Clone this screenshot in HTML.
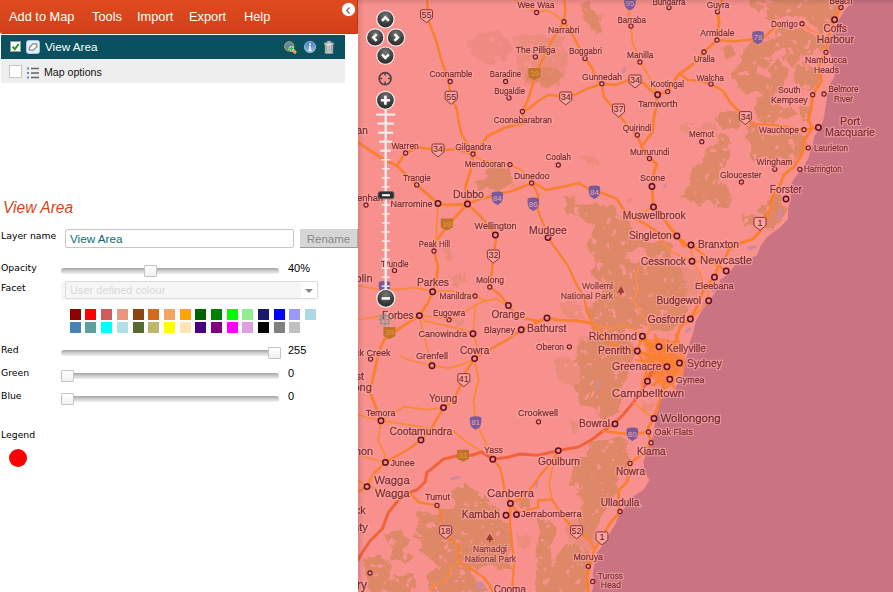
<!DOCTYPE html>
<html><head><meta charset="utf-8"><title>Spatial Portal</title>
<style>
html,body{margin:0;padding:0;width:893px;height:592px;overflow:hidden;background:#fff;font-family:"Liberation Sans",sans-serif}
#panel{position:absolute;left:0;top:0;width:358px;height:592px;background:#fff;overflow:hidden}
#hdr{position:absolute;left:0;top:0;width:358px;height:34px;background:linear-gradient(#e04b21,#d9461c 50%,#d03f1b);border-right:1px solid #c2350f;border-bottom:1px solid #c3370f;box-sizing:border-box;border-bottom-left-radius:3px}
#hdr span{position:absolute;top:9px;color:#fff;font-size:12.8px;line-height:15px;white-space:nowrap}
#collapse{position:absolute;left:342px;top:2.5px;width:13px;height:13px;border-radius:50%;background:#fff;box-shadow:0 0 1px #ccc}
#lyr{position:absolute;left:1px;top:35px;width:344px;height:24px;background:#09515e}
#lyr span{position:absolute;left:44px;top:5px;color:#fff;font-size:11.7px;line-height:14px}
#opt{position:absolute;left:1px;top:59px;width:344px;height:24px;background:#eeeeee}
#opt span{position:absolute;left:43px;top:6px;color:#111;font-size:10.6px;line-height:14px}
.cb{position:absolute;width:11px;height:11px;background:#fff;border:1px solid #c8c8c0}
.lbl{position:absolute;left:1px;margin-top:1px;font-family:"DejaVu Sans","Liberation Sans",sans-serif;font-size:9.3px;line-height:12px;color:#000;white-space:nowrap}
.val{position:absolute;left:288px;margin-top:-1px;font-size:11px;line-height:12px;color:#000}
.trk{position:absolute;left:61px;margin-top:1px;width:218px;height:6px;border-radius:3px;background:linear-gradient(#a2a2a2,#cbcbcb 45%,#f0f0f0)}
.knob{position:absolute;margin-top:0;width:11px;height:10px;border:1px solid #c4c4c4;background:linear-gradient(#fff,#f0f0f0);border-radius:1px}
.sw{position:absolute;width:11px;height:11px;display:block}
#ttl{position:absolute;left:3px;top:199px;font-size:15.6px;font-style:italic;color:#d9461c;line-height:18px}
#inp{position:absolute;left:65px;top:229px;width:229px;height:19px;box-sizing:border-box;border:1px solid #c6c6c6;border-radius:2px;background:#fff;color:#0b6e6e;font-size:11.7px;line-height:17px;padding-left:4px;padding-top:0}
#btn{position:absolute;left:300px;top:229px;width:58px;height:19px;box-sizing:border-box;background:#d6d6d6;border-bottom:1px solid #9a9a9a;border-right:1px solid #aaa;color:#8a8a8a;font-size:11.5px;line-height:20px;text-align:center}
#sel{position:absolute;left:61px;top:281px;width:258px;height:19px;background:#f6f6f6}
#sel div{position:absolute;left:4px;top:0;width:253px;height:18px;box-sizing:border-box;border:1px solid #dcdcdc;border-radius:2px;color:#d8d8d8;font-size:11px;line-height:17px;padding-left:4px}
#sel b{position:absolute;left:240px;top:1px;width:16px;height:16px;background:#fff}
#sel b:after{content:"";position:absolute;left:3.5px;top:6.5px;border:4.5px solid transparent;border-top:4.5px solid #888;border-bottom:0}
#map{position:absolute;left:358px;top:0;width:535px;height:592px;background:#f89090;overflow:hidden}
</style></head><body>
<div id="panel">
<div id="hdr"><span style="left:9px">Add to Map</span><span style="left:92px">Tools</span><span style="left:137px">Import</span><span style="left:189px">Export</span><span style="left:244px">Help</span>
<div id="collapse"><svg width="13" height="13" viewBox="0 0 13 13"><path d="M7.6 3.5 L4.8 6.6 L7.6 9.7" fill="none" stroke="#777" stroke-width="1.5"/></svg></div></div>
<div id="lyr"><i class="cb" style="left:9px;top:6px;width:9px;height:9px;border-color:#999"></i>
<svg style="position:absolute;left:8px;top:5px" width="13" height="13" viewBox="0 0 13 13"><path d="M3.6 6.6 L5.8 9.2 L9.8 4" fill="none" stroke="#1a9a1a" stroke-width="1.9"/></svg>
<svg style="position:absolute;left:25px;top:5px" width="14" height="14" viewBox="0 0 15 15"><rect x="0.5" y="0.5" width="14" height="14" rx="2.5" fill="#e4f1fa" stroke="#a9cbe4"/><path d="M3.600 10.800 V8 L7.200 4.200 H11.600 V7 L8 10.800Z" fill="#fff" stroke="#8a8a8a" stroke-width="1.4" stroke-linejoin="round"/></svg>
<span>View Area</span>
<svg style="position:absolute;left:282px;top:4px" width="56" height="17" viewBox="0 0 56 17">
<defs><linearGradient id="ig" x1="0" y1="0" x2="0" y2="1"><stop offset="0" stop-color="#3f76c4"/><stop offset="1" stop-color="#9dbfe8"/></linearGradient><linearGradient id="tg" x1="0" y1="0" x2="1" y2="0"><stop offset="0" stop-color="#b4b4b4"/><stop offset=".5" stop-color="#e6e6e6"/><stop offset="1" stop-color="#b0b0b0"/></linearGradient></defs>
<circle cx="6.3" cy="7.4" r="4.7" fill="#5b8ba2" stroke="#c9a64e" stroke-width="1"/><path d="M10.2 11.300 L12 13.2" stroke="#e0a468" stroke-width="3.2" stroke-linecap="round"/><path d="M5.6 9.7 h5.400 M8.3 7 v5.400" stroke="#d8f0d0" stroke-width="2.6"/><path d="M6 9.7 h4.600 M8.3 7.4 v4.600" stroke="#4cb84c" stroke-width="1.5"/>
<circle cx="27" cy="8" r="5.600" fill="url(#ig)" stroke="#8fb4e6" stroke-width="1"/><path d="M27 7.200 v4 M25.600 11.300 h3 M26 7.200 h1.200" stroke="#fff" stroke-width="1.500"/><circle cx="27" cy="5" r="1" fill="#fff"/>
<path d="M41.400 3.800 h9.200 v1.800 h-0.700 v8.800 h-7.800 v-8.800 h-0.700z M44.200 2.200 h3.600 v1.600 h-3.600z" fill="url(#tg)" stroke="#9a9a9a" stroke-width=".5"/><path d="M43.800 6.500 v7 M46 6.500 v7 M48.200 6.500 v7" stroke="#8f8f8f" stroke-width="0.9"/>
</svg></div>
<div id="opt"><i class="cb" style="left:8px;top:6px"></i>
<svg style="position:absolute;left:26px;top:8px" width="13" height="12" viewBox="0 0 13 12"><path d="M0 1.5h2M0 6h2M0 10.5h2" stroke="#5a8fd0" stroke-width="2"/><path d="M4 1.5h8M4 6h8M4 10.5h8" stroke="#666" stroke-width="1.3"/></svg>
<span>Map options</span></div>
<div id="ttl">View Area</div>
<div class="lbl" style="top:229px">Layer name</div>
<div id="inp">View Area</div><div id="btn">Rename</div>
<div class="lbl" style="top:261px">Opacity</div><div class="trk" style="top:267px"></div><i class="knob" style="left:144px;top:265px"></i><div class="val" style="top:263px">40%</div>
<div class="lbl" style="top:281px">Facet</div>
<div id="sel"><div>User defined colour</div><b></b></div>
<i class="sw" style="left:70px;top:309px;background:#8b0000"></i>
<i class="sw" style="left:85px;top:309px;background:#ff0000"></i>
<i class="sw" style="left:101px;top:309px;background:#cd5c5c"></i>
<i class="sw" style="left:117px;top:309px;background:#e9967a"></i>
<i class="sw" style="left:133px;top:309px;background:#8b4513"></i>
<i class="sw" style="left:148px;top:309px;background:#d2691e"></i>
<i class="sw" style="left:164px;top:309px;background:#f4a460"></i>
<i class="sw" style="left:180px;top:309px;background:#ffa500"></i>
<i class="sw" style="left:195px;top:309px;background:#006400"></i>
<i class="sw" style="left:211px;top:309px;background:#008000"></i>
<i class="sw" style="left:227px;top:309px;background:#00ff00"></i>
<i class="sw" style="left:242px;top:309px;background:#90ee90"></i>
<i class="sw" style="left:258px;top:309px;background:#191970"></i>
<i class="sw" style="left:274px;top:309px;background:#0000ff"></i>
<i class="sw" style="left:289px;top:309px;background:#9999ff"></i>
<i class="sw" style="left:305px;top:309px;background:#add8e6"></i>
<i class="sw" style="left:70px;top:322px;background:#4682b4"></i>
<i class="sw" style="left:85px;top:322px;background:#5f9ea0"></i>
<i class="sw" style="left:101px;top:322px;background:#00ffff"></i>
<i class="sw" style="left:117px;top:322px;background:#b0e0e6"></i>
<i class="sw" style="left:133px;top:322px;background:#556b2f"></i>
<i class="sw" style="left:148px;top:322px;background:#bdb76b"></i>
<i class="sw" style="left:164px;top:322px;background:#ffff00"></i>
<i class="sw" style="left:180px;top:322px;background:#ffe4b5"></i>
<i class="sw" style="left:195px;top:322px;background:#4b0082"></i>
<i class="sw" style="left:211px;top:322px;background:#800080"></i>
<i class="sw" style="left:227px;top:322px;background:#ff00ff"></i>
<i class="sw" style="left:242px;top:322px;background:#dda0dd"></i>
<i class="sw" style="left:258px;top:322px;background:#000000"></i>
<i class="sw" style="left:274px;top:322px;background:#808080"></i>
<i class="sw" style="left:289px;top:322px;background:#c0c0c0"></i>
<div class="lbl" style="top:343px">Red</div><div class="trk" style="top:349px"></div><i class="knob" style="left:268px;top:347px"></i><div class="val" style="top:345px">255</div>
<div class="lbl" style="top:366px">Green</div><div class="trk" style="top:372px"></div><i class="knob" style="left:61px;top:370px"></i><div class="val" style="top:368px">0</div>
<div class="lbl" style="top:389px">Blue</div><div class="trk" style="top:395px"></div><i class="knob" style="left:61px;top:393px"></i><div class="val" style="top:391px">0</div>
<div class="lbl" style="top:428px">Legend</div>
<div style="position:absolute;left:9px;top:449px;width:18px;height:18px;border-radius:50%;background:#ff0000"></div>
</div>
<div id="map"><svg width="535" height="592" viewBox="0 0 535 592" style="position:absolute;left:0;top:0;font-family:'Liberation Sans',sans-serif">
<defs><linearGradient id="sht" x1="0" y1="0" x2="0" y2="1"><stop offset="0" stop-color="#000" stop-opacity=".10"/><stop offset="1" stop-color="#000" stop-opacity="0"/></linearGradient><linearGradient id="shl" x1="0" y1="0" x2="1" y2="0"><stop offset="0" stop-color="#000" stop-opacity=".10"/><stop offset="1" stop-color="#000" stop-opacity="0"/></linearGradient><filter id="halo" x="0" y="0" width="535" height="592" filterUnits="userSpaceOnUse"><feMorphology in="SourceAlpha" operator="dilate" radius="1" result="d"/><feGaussianBlur in="d" stdDeviation=".5" result="b"/><feFlood flood-color="#ffb0ae" flood-opacity=".62"/><feComposite in2="b" operator="in" result="h"/><feMerge><feMergeNode in="h"/><feMergeNode in="SourceGraphic"/></feMerge></filter><filter id="rough" x="0" y="0" width="535" height="592" filterUnits="userSpaceOnUse"><feTurbulence type="fractalNoise" baseFrequency="0.07" numOctaves="4" seed="7" result="n"/><feDisplacementMap in="SourceGraphic" in2="n" scale="14" xChannelSelector="R" yChannelSelector="G" result="d"/><feTurbulence type="fractalNoise" baseFrequency="0.13" numOctaves="3" seed="23" result="m"/><feColorMatrix in="m" type="matrix" values="0 0 0 0 0  0 0 0 0 0  0 0 0 0 0  0 0 16 0 -4.6" result="mk"/><feComposite in="d" in2="mk" operator="in"/></filter><radialGradient id="gbtn" cx=".5" cy=".3" r=".8"><stop offset="0" stop-color="#777"/><stop offset=".6" stop-color="#3a3a3a"/><stop offset="1" stop-color="#222"/></radialGradient></defs>
<rect width="535" height="592" fill="#f8908d"/>
<g filter="url(#rough)"><g fill="#ee8a82">
<polygon points="156.0,34.0 182.0,36.0 206.0,34.0 208.0,60.0 204.0,85.0 182.0,88.0 164.0,84.0 158.0,66.0"/>
<polygon points="113.5,38.5 121.6,32.4 129.7,35.5 139.9,32.4 150.0,40.5 154.1,52.7 150.0,60.8 141.9,56.8 137.8,64.9 125.7,62.8 117.6,56.8 112.5,48.6"/>
</g><g fill="#ec8c7c">
<polygon points="222.6,153.4 228.6,154.5 240.8,163.6 238.8,167.6 230.7,163.6"/>
<polygon points="269.2,198.0 274.3,197.0 275.3,203.1 270.2,205.1"/>
<polygon points="321.9,124.1 332.0,122.0 340.1,128.1 350.3,124.1 360.0,126.1 360.0,134.2 350.3,132.2 338.1,134.2 325.9,132.2"/>
<polygon points="158.0,36.0 204.0,36.0 206.0,66.0 162.0,68.0"/>
<polygon points="168.0,68.0 202.0,67.0 203.0,84.0 182.0,87.0 169.0,84.0"/>
<polygon points="152.0,183.9 158.1,182.8 157.7,188.9 152.4,189.9"/>
<polygon points="85.1,246.1 92.2,247.1 93.2,260.3 88.2,260.3"/>
<polygon points="91.2,274.5 105.4,275.5 106.4,284.6 99.3,287.6 92.2,285.6"/>
<polygon points="97.3,318.0 107.4,317.0 107.4,325.1 98.3,325.1"/>
<polygon points="321.9,260.3 334.1,266.4 342.2,276.5 342.2,288.6 338.1,300.8 331.0,306.9 322.9,293.7 327.0,280.5 319.9,273.4"/>
<polygon points="202.3,302.8 212.4,300.8 226.6,306.9 225.6,318.0 214.5,319.1 204.3,315.0"/>
<polygon points="220.5,337.3 232.7,335.3 240.8,345.4 238.8,360.0 220.5,360.0 216.5,349.5"/>
<polygon points="198.2,360.0 224.6,360.0 224.6,386.4 216.5,386.4 202.3,382.3 197.2,374.2"/>
<polygon points="212.4,422.8 219.5,420.8 221.6,430.9 214.5,433.0"/>
<polygon points="285.4,400.5 296.6,401.6 295.5,412.7 287.4,412.7"/>
<polygon points="160.1,534.8 172.3,536.9 171.3,549.0 161.1,548.0"/>
<polygon points="209.1,520.2 218.4,515.5 230.8,528.0 235.5,538.9 230.8,554.4 223.0,548.2 215.3,546.6 210.6,534.2"/>
</g><g fill="#de8868" stroke="#de8868" stroke-width="3.5" stroke-linejoin="round">
<polygon points="395.8,0.0 395.0,5.9 400.2,10.3 406.1,5.9 410.5,10.3 409.0,17.6 414.9,20.6 420.7,14.7 426.6,17.6 432.5,14.7 438.4,17.6 444.2,14.7 450.1,19.1 457.4,25.0 464.8,29.4 470.7,26.4 475.1,17.6 478.0,8.8 480.9,0.0"/>
<polygon points="419.3,29.4 428.1,27.9 438.4,30.8 447.2,29.4 456.0,33.8 464.8,36.7 467.7,44.1 463.3,51.4 456.0,48.5 450.1,54.3 444.2,49.9 438.4,55.8 441.3,63.1 435.4,66.1 429.5,58.7 431.0,49.9 425.1,47.0 420.7,51.4 417.8,44.1 420.7,36.7"/>
<polygon points="388.4,48.5 394.3,42.6 401.6,44.1 406.1,39.6 413.4,41.1 417.8,44.1 416.3,51.4 410.5,55.8 411.9,61.7 406.1,66.1 400.2,63.1 395.8,67.5 398.7,76.4 406.1,82.2 409.0,86.9 381.1,86.9 379.6,79.3 375.2,73.4 378.2,66.1 384.0,64.6 382.6,57.3 388.4,54.3"/>
<polygon points="366.4,51.4 372.3,48.5 374.5,54.3 369.3,57.3"/>
<polygon points="438.4,70.5 447.2,66.1 456.0,69.0 458.9,76.4 456.0,86.9 444.2,86.9 441.3,79.3"/>
<polygon points="411.9,69.0 420.7,64.6 428.1,69.0 426.6,79.3 420.7,86.9 411.9,86.9 413.4,76.4"/>
<polygon points="380.2,80.0 386.1,84.4 390.5,81.5 403.7,80.0 412.5,84.4 418.4,80.0 424.2,82.9 421.3,88.8 415.4,91.7 412.5,99.1 415.4,106.4 424.2,109.4 433.0,107.9 437.4,113.8 430.1,118.2 421.3,116.7 415.4,122.6 406.6,119.6 400.7,115.2 396.3,109.4 399.3,102.0 403.7,94.7 397.8,90.3 390.5,93.2 383.1,88.8"/>
<polygon points="359.6,118.2 368.4,113.8 375.8,110.8 380.2,116.7 378.7,124.1 371.4,127.0 364.0,124.1"/>
<polygon points="391.9,125.5 400.7,128.5 403.7,135.8 409.5,138.7 406.6,146.1 403.7,153.4 397.8,159.3 393.4,153.4 394.9,144.6 390.5,138.7 393.4,132.9"/>
<polygon points="350.8,149.0 359.6,146.1 367.0,150.5 371.4,157.8 368.4,166.9 353.7,166.9 347.9,159.3"/>
<polygon points="424.2,141.7 433.0,138.7 441.9,141.7 444.8,149.0 438.9,156.4 430.1,159.3 424.2,153.4"/>
<polygon points="443.3,105.0 450.7,106.4 449.2,118.2 443.3,121.1"/>
<polygon points="358.2,138.7 365.5,135.8 371.4,141.7 364.0,146.1"/>
<polygon points="393.5,138.2 403.6,132.2 415.8,138.2 425.9,134.2 440.1,136.2 446.2,142.3 442.2,154.5 432.0,160.5 425.9,156.5 415.8,160.5 405.7,154.5 395.5,156.5"/>
<polygon points="355.0,184.9 365.1,186.9 371.2,195.0 367.2,205.1 359.1,207.2 355.0,205.1"/>
<polygon points="411.8,201.1 421.9,197.0 425.9,209.2 423.9,221.4 415.8,229.5 407.7,225.4 405.7,215.3 399.6,209.2 405.7,203.1"/>
<polygon points="385.4,215.3 397.6,217.3 395.5,225.4 387.4,225.4"/>
<polygon points="334.1,174.7 342.2,168.6 352.3,163.6 360.0,166.6 360.0,205.1 352.3,201.1 342.2,205.1 334.1,201.1 328.0,195.0 334.1,186.9 332.0,180.8"/>
<polygon points="208.4,201.1 216.5,199.1 220.5,205.1 230.7,207.2 238.8,203.1 246.9,209.2 257.0,207.2 261.1,215.3 269.2,221.4 273.2,229.5 269.2,240.0 232.7,240.0 236.8,229.5 228.6,221.4 220.5,215.3 212.4,211.2"/>
<polygon points="226.6,4.1 234.7,6.1 240.8,16.2 242.8,28.4 238.8,34.5 232.7,30.4 228.6,20.3 225.6,12.2"/>
<polygon points="172.0,70.0 200.0,69.0 201.0,82.0 182.0,85.0 173.0,82.0"/>
<polygon points="129.7,170.7 150.0,168.6 151.0,180.8 145.9,186.9 141.9,195.0 133.8,190.9 129.7,186.9 121.6,190.9 119.6,180.8 127.7,178.8"/>
<polygon points="230.7,240.0 273.2,240.0 275.3,242.4 305.7,241.6 312.8,246.1 309.7,254.2 311.8,264.3 319.9,273.4 327.0,280.5 322.9,293.7 330.0,306.9 321.9,321.1 313.8,329.2 305.7,328.2 293.5,329.2 287.4,325.5 277.3,329.2 267.2,326.1 257.0,331.2 246.9,329.2 235.1,325.1 231.1,317.0 233.1,308.9 239.8,300.8 245.9,291.7 246.9,280.5 235.7,275.5 238.8,266.4 240.8,258.2 234.7,252.2"/>
<polygon points="240.8,335.3 257.0,333.2 271.2,341.4 275.3,353.5 273.2,360.0 222.6,360.0 220.5,349.5 226.6,341.4"/>
<polygon points="220.5,360.0 261.1,360.0 269.2,372.2 265.1,384.3 257.0,390.4 261.1,400.5 257.0,412.7 246.9,416.8 238.8,408.6 228.6,404.6 220.5,396.5 218.5,386.4 223.6,372.2"/>
<polygon points="216.5,480.0 222.6,467.4 230.7,457.3 238.8,447.2 248.9,441.1 261.1,437.0 269.2,441.1 265.1,451.2 259.1,459.3 257.0,469.5 255.0,480.0"/>
<polygon points="58.8,516.6 68.9,512.5 77.0,518.6 81.1,510.5 89.2,512.5 97.3,502.4 95.3,492.3 105.4,486.2 113.5,492.3 121.6,496.3 129.7,502.4 141.9,518.6 150.0,524.7 152.0,538.9 145.9,557.1 154.1,565.2 141.9,567.3 129.7,561.2 121.6,567.3 109.5,565.2 113.5,577.4 125.7,585.5 129.7,592.0 73.0,592.0 70.9,577.4 81.1,569.3 77.0,559.2 66.9,553.1 68.9,540.9 58.8,536.9 60.8,526.7"/>
<polygon points="30.4,538.9 40.5,532.8 48.6,538.9 44.6,549.0 52.7,557.1 44.6,563.2 32.4,557.1 34.5,547.0"/>
<polygon points="8.1,561.2 20.3,557.1 32.4,563.2 30.4,573.4 40.5,577.4 52.7,573.4 56.8,585.5 48.6,592.0 12.2,592.0 10.1,577.4"/>
<polygon points="239.1,440.0 264.7,440.0 269.9,450.3 267.3,465.7 259.6,481.1 254.5,491.4 249.3,506.8 241.6,517.1 236.5,529.9 231.4,537.6 226.2,529.9 223.6,517.1 228.8,504.2 223.6,491.4 213.4,483.7 215.9,470.8 223.6,458.0 231.4,447.7"/>
<polygon points="184.2,520.2 192.0,518.7 195.8,528.0 191.2,538.9 189.6,551.3 192.0,562.2 195.1,570.0 195.1,592.0 180.3,592.0 181.8,570.0 179.5,551.3 182.6,538.9"/>
<polygon points="195.1,562.2 199.7,554.4 209.1,551.3 215.3,546.6 223.0,548.2 230.8,554.4 229.3,565.3 230.8,577.7 229.3,592.0 195.1,592.0"/>
<polygon points="162.0,499.1 169.7,498.6 170.2,508.8 162.0,509.4"/>
</g><g fill="#f8908d">
<polygon points="269.2,250.1 277.3,247.1 286.4,250.1 287.4,259.3 279.3,262.3 271.2,260.3"/>
</g></g>
<polygon points="495.0,0.0 487.0,10.0 480.7,20.0 474.6,34.5 470.5,48.6 474.6,60.8 476.6,77.0 470.5,87.0 468.5,101.0 465.5,120.0 462.4,128.0 456.4,136.0 454.3,146.4 450.3,158.5 444.2,168.7 436.0,178.8 432.0,187.0 433.0,199.0 430.0,209.0 430.0,219.3 422.0,227.4 413.8,233.5 409.0,237.0 403.0,245.3 399.0,255.4 389.0,259.5 376.7,265.5 370.6,273.7 362.5,279.7 358.5,290.0 352.4,300.0 344.3,310.0 338.2,320.3 335.0,333.5 332.0,341.6 329.6,353.8 326.9,364.6 325.5,374.0 320.0,383.5 316.0,390.0 306.6,395.7 302.5,400.0 299.6,410.7 297.6,420.8 295.5,433.0 293.5,441.0 289.5,451.0 285.4,461.4 286.4,471.5 291.5,480.0 285.4,490.0 275.3,496.3 269.2,504.4 261.0,514.6 257.0,524.7 251.0,534.8 245.0,545.0 238.8,553.0 236.8,563.2 234.7,573.4 236.8,581.5 233.7,592.0 535.0,592.0 535.0,0.0" fill="#c97383"/>
<ellipse cx="394.0" cy="247.5" rx="5.2" ry="1.7" transform="rotate(-10 394.0 247.5)" fill="#cd8a9e"/>
<ellipse cx="356.0" cy="288.0" rx="2.2" ry="4.5" transform="rotate(15 356.0 288.0)" fill="#cd8a9e"/>
<ellipse cx="346.0" cy="305.0" rx="1.9" ry="3.0" transform="rotate(10 346.0 305.0)" fill="#cd8a9e"/>
<ellipse cx="179.0" cy="484.0" rx="1.7" ry="3.8" transform="rotate(10 179.0 484.0)" fill="#cd8a9e"/>
<ellipse cx="122.0" cy="586.0" rx="3.8" ry="4.5" transform="rotate(-30 122.0 586.0)" fill="#cd8a9e"/>
<ellipse cx="97.0" cy="478.0" rx="6.0" ry="1.5" transform="rotate(-15 97.0 478.0)" fill="#cd8a9e"/>
<ellipse cx="86.0" cy="525.0" rx="1.2" ry="6.0" transform="rotate(5 86.0 525.0)" fill="#cd8a9e"/>
<ellipse cx="150.0" cy="227.0" rx="1.9" ry="3.8" transform="rotate(30 150.0 227.0)" fill="#cd8a9e"/>
<ellipse cx="266.0" cy="70.0" rx="1.9" ry="3.4" transform="rotate(30 266.0 70.0)" fill="#cd8a9e"/>
<ellipse cx="307.0" cy="186.0" rx="2.2" ry="1.5" transform="rotate(-30 307.0 186.0)" fill="#cd8a9e"/>
<ellipse cx="422.0" cy="214.0" rx="2.2" ry="6.0" transform="rotate(20 422.0 214.0)" fill="#cd8a9e"/>
<ellipse cx="240.0" cy="385.0" rx="1.4" ry="6.0" transform="rotate(10 240.0 385.0)" fill="#cd8a9e"/>
<ellipse cx="282.0" cy="506.0" rx="3.0" ry="1.9" transform="rotate(0 282.0 506.0)" fill="#cd8a9e"/>
<ellipse cx="330.0" cy="330.0" rx="3.8" ry="1.4" transform="rotate(-35 330.0 330.0)" fill="#cd8a9e"/>
<ellipse cx="217.0" cy="462.0" rx="1.5" ry="2.2" transform="rotate(0 217.0 462.0)" fill="#cd8a9e"/>
<path d="M288.0,340.0 306.0,338.0 322.0,346.0 328.0,360.0 326.0,374.0 316.0,384.0 302.0,386.0 292.0,376.0 286.0,360.0 Z" fill="#fb7a2c" opacity=".55"/>
<g fill="none" stroke-linecap="round" stroke-linejoin="round">
<polyline points="69.0,0.0 71.0,22.0 78.0,40.5 83.0,59.0 91.0,81.0 92.0,95.0 99.0,109.5 100.3,120.0 103.4,134.0 115.0,154.0" stroke="#f9802f" stroke-width="2.5"/>
<polyline points="206.0,21.7 195.0,38.5 186.0,56.8 180.0,69.0 176.0,80.0 170.0,100.0 164.4,111.5" stroke="#f9802f" stroke-width="2.5"/>
<polyline points="206.0,21.7 207.4,10.0 206.4,0.0" stroke="#f9802f" stroke-width="2.5"/>
<polyline points="206.0,21.7 196.0,14.0 188.0,10.0 178.6,12.5 167.0,6.0 157.0,0.0" stroke="#f98a3c" stroke-width="1.9"/>
<polyline points="206.0,21.7 215.5,36.5 227.0,58.4 234.7,69.0 236.8,79.0 243.9,83.7" stroke="#f9802f" stroke-width="2.5"/>
<polyline points="164.4,111.5 172.0,108.0 180.0,101.0 190.0,95.0 201.0,96.0 216.5,95.0 228.7,89.0 243.9,83.7 257.0,85.0 271.0,80.0 285.4,83.0 293.5,91.0 299.6,94.7" stroke="#f9802f" stroke-width="2.5"/>
<polyline points="243.9,83.7 245.9,97.3 255.0,107.4 265.0,120.0 273.0,130.0 279.3,135.0 283.4,146.4" stroke="#f9802f" stroke-width="2.5"/>
<polyline points="270.0,0.0 270.0,10.0 273.0,26.0 274.0,40.5 282.0,62.0 291.5,77.0 299.6,94.7" stroke="#f98a3c" stroke-width="1.9"/>
<polyline points="299.6,94.7 309.7,91.6 320.0,75.0 334.0,65.0 346.0,52.0 358.4,40.5 361.0,22.0 359.5,11.8 364.0,0.0" stroke="#f9802f" stroke-width="3.0"/>
<polyline points="299.6,94.7 297.6,109.5 295.5,120.0 294.5,132.0 283.4,146.4 291.5,158.5 298.6,163.6 295.5,174.7 294.0,186.5 295.5,207.0 305.7,219.3 318.9,236.0 326.0,246.0 333.0,245.0" stroke="#f9802f" stroke-width="3.0"/>
<polyline points="322.0,74.0 330.0,80.0 342.0,81.0 353.0,84.0 355.0,85.0 365.0,91.0 373.0,103.4 383.4,113.5 389.5,120.0 395.5,124.0 415.8,125.0 436.0,128.0 446.0,129.7 460.4,127.5" stroke="#f9802f" stroke-width="2.5"/>
<polyline points="487.0,0.0 482.7,7.0 476.6,19.7 470.5,36.5 468.0,52.3 460.4,67.0 463.5,81.0 454.7,94.7 453.3,107.4 450.3,120.0 454.3,128.0 446.0,140.0 444.0,154.5 436.0,166.6 426.0,174.7 422.0,185.0 413.8,197.0 412.8,209.0 407.7,217.3 402.6,230.5 395.0,239.0 382.8,243.0 370.6,249.3 368.6,255.4 360.5,265.5 356.4,277.5 346.0,288.6 340.0,304.9 332.0,319.0 322.0,327.0 317.8,341.4 309.7,353.5 306.0,362.0" stroke="#f9802f" stroke-width="3.0"/>
<polyline points="359.0,40.0 375.0,41.5 393.5,39.5 403.6,39.5 415.8,28.4 422.0,23.0" stroke="#f9802f" stroke-width="2.5"/>
<polyline points="444.0,23.7 452.0,30.0 462.4,34.5 468.5,40.5" stroke="#f98a3c" stroke-width="1.9"/>
<polyline points="0.0,142.3 24.3,158.5 38.5,165.6 58.8,184.9 80.0,203.5 89.0,205.0 109.5,204.0" stroke="#f9802f" stroke-width="2.8"/>
<polyline points="38.5,165.6 47.6,153.0 60.8,147.4 80.0,150.0 97.3,149.4 115.0,154.0" stroke="#f9802f" stroke-width="2.5"/>
<polyline points="164.4,111.5 166.0,123.0 146.0,128.0 129.7,136.0 121.6,146.4 115.0,154.0 112.5,170.7 107.4,187.0 109.5,204.0" stroke="#f9802f" stroke-width="2.8"/>
<polyline points="115.0,154.0 123.7,160.5 152.0,164.6 164.0,170.7 174.0,182.8" stroke="#f98a3c" stroke-width="1.9"/>
<polyline points="109.5,204.0 121.6,199.0 137.8,195.0 154.0,191.0 174.0,182.8 180.0,185.0 188.0,190.0 208.4,186.0 220.5,183.0 230.7,189.0 247.0,194.0 259.0,199.0 265.0,209.0 275.3,217.3 289.5,225.4 301.6,233.5 318.9,236.0" stroke="#f9802f" stroke-width="2.5"/>
<polyline points="109.5,204.0 95.3,219.3 87.0,229.5 79.0,240.0 78.0,240.0 76.0,251.0 80.0,266.4 78.0,280.5 74.6,291.7 70.0,302.8 61.4,315.6 40.5,329.0 26.4,339.3 20.3,353.5 18.0,365.0 12.0,392.0 23.0,420.8" stroke="#f9802f" stroke-width="2.8"/>
<polyline points="80.0,203.5 79.0,221.4 78.0,240.0" stroke="#f98a3c" stroke-width="1.9"/>
<polyline points="109.5,204.0 121.6,215.3 131.8,227.4 137.4,235.0 137.8,240.0 134.8,262.3 131.8,287.0 142.0,294.7 150.4,305.5 160.0,317.0 180.0,321.0 189.0,318.0" stroke="#f9802f" stroke-width="2.5"/>
<polyline points="174.0,182.8 180.0,195.0 180.0,211.0 186.0,225.4 190.0,237.6 200.0,252.0 210.4,266.4 216.5,280.5 226.6,298.8 228.6,311.0 234.7,325.0" stroke="#f9802f" stroke-width="2.3"/>
<polyline points="295.5,207.0 285.4,212.0 275.3,217.3" stroke="#f98a3c" stroke-width="1.9"/>
<polyline points="74.6,291.7 56.8,287.6 36.5,289.7 16.0,288.6 0.0,285.6" stroke="#f98a3c" stroke-width="1.9"/>
<polyline points="74.6,291.7 91.0,290.7 117.0,296.0 127.7,300.8 137.8,298.8 150.4,305.5" stroke="#f98a3c" stroke-width="1.9"/>
<polyline points="61.4,315.6 77.0,317.0 91.0,319.7 105.4,313.0 117.6,304.9 127.7,300.8" stroke="#f98a3c" stroke-width="1.7"/>
<polyline points="61.4,315.6 67.0,321.0 85.0,325.0 101.4,329.0 115.0,333.7 119.6,347.4 116.6,358.6" stroke="#f98a3c" stroke-width="1.9"/>
<polyline points="115.0,333.7 116.6,317.0 117.6,304.9" stroke="#f98a3c" stroke-width="1.6"/>
<polyline points="61.4,315.6 65.0,331.0 69.0,347.4 74.0,365.7" stroke="#f98a3c" stroke-width="1.7"/>
<polyline points="116.6,358.6 131.8,349.5 150.0,339.3 163.2,329.8 180.0,322.0 189.0,318.0" stroke="#f9802f" stroke-width="2.5"/>
<polyline points="61.4,315.6 42.0,318.0 22.0,316.0 0.0,320.0" stroke="#f98a3c" stroke-width="1.5"/>
<polyline points="189.0,318.0 200.3,320.0 220.5,321.0 232.7,323.0 240.8,331.0 247.0,341.0 261.0,347.4 279.3,351.0 292.0,356.0 306.0,362.0 321.5,363.0" stroke="#f9802f" stroke-width="3.0"/>
<polyline points="234.7,325.0 252.0,328.0 267.0,326.0 277.3,330.0 284.4,336.3 294.0,342.0 301.0,346.8" stroke="#f98a3c" stroke-width="1.9"/>
<polyline points="281.4,266.4 277.3,276.5 280.3,288.6 275.3,300.8 281.4,311.0 289.5,321.0 291.5,333.0 284.4,336.3" stroke="#fb8a45" stroke-width="1.6"/>
<polyline points="302.0,240.0 313.8,252.0 334.0,261.3 347.0,262.0 360.5,265.5 368.2,271.0" stroke="#f98a3c" stroke-width="1.9"/>
<polyline points="318.9,236.0 328.0,244.0 333.5,244.5 342.0,252.0 354.0,262.0 368.2,271.0" stroke="#f9802f" stroke-width="2.5"/>
<polyline points="334.0,261.3 333.5,244.5" stroke="#f98a3c" stroke-width="1.6"/>
<polyline points="334.0,261.3 342.0,272.0 346.0,288.6" stroke="#f98a3c" stroke-width="1.6"/>
<polyline points="356.5,277.3 350.0,290.0 350.7,300.8 342.0,310.0 332.4,319.0" stroke="#f98a3c" stroke-width="1.7"/>
<polyline points="279.3,351.0 284.4,336.3" stroke="#f9802f" stroke-width="2.6"/>
<polyline points="301.0,346.8 306.0,362.0 309.0,366.7 321.5,363.0" stroke="#f9802f" stroke-width="2.6"/>
<polyline points="284.4,336.3 294.0,350.0 309.0,366.7" stroke="#f9802f" stroke-width="2.6"/>
<polyline points="279.3,351.0 287.0,365.0 289.5,381.3" stroke="#f9802f" stroke-width="2.6"/>
<polyline points="289.5,381.3 297.0,372.0 309.0,366.7" stroke="#f9802f" stroke-width="2.6"/>
<polyline points="309.0,366.7 311.8,379.3 305.7,384.0" stroke="#f9802f" stroke-width="2.6"/>
<polyline points="301.0,346.8 314.0,352.0 321.5,363.0" stroke="#f9802f" stroke-width="2.6"/>
<polyline points="292.0,356.0 297.0,366.0 309.0,366.7" stroke="#f9802f" stroke-width="2.6"/>
<polyline points="297.0,335.0 302.0,347.0 317.8,341.4" stroke="#f9802f" stroke-width="2.6"/>
<polyline points="309.7,353.5 314.0,360.0 321.5,363.0 318.0,372.0 311.8,379.3" stroke="#f9802f" stroke-width="2.6"/>
<polyline points="287.0,345.0 301.0,346.8 309.7,353.5" stroke="#f9802f" stroke-width="2.6"/>
<polyline points="293.5,372.0 302.0,374.0 311.8,379.3" stroke="#f9802f" stroke-width="2.6"/>
<polyline points="282.0,340.0 297.0,345.0 313.0,354.0 327.0,362.0" stroke="#f9802f" stroke-width="2.2"/>
<polyline points="282.0,352.0 297.0,356.0 313.0,362.0 325.0,366.0" stroke="#f9802f" stroke-width="2.2"/>
<polyline points="287.0,335.0 292.0,350.0 290.0,368.0 284.0,385.0" stroke="#f9802f" stroke-width="2.2"/>
<polyline points="297.0,338.0 302.0,355.0 304.0,372.0 297.0,385.0" stroke="#f9802f" stroke-width="2.2"/>
<polyline points="310.0,340.0 312.0,355.0 317.0,370.0 312.0,385.0" stroke="#f9802f" stroke-width="2.2"/>
<polyline points="290.0,374.0 302.0,370.0 317.0,372.0" stroke="#f9802f" stroke-width="2.2"/>
<polyline points="294.0,385.0 304.0,380.0 314.0,384.0 318.0,390.0" stroke="#f9802f" stroke-width="2.2"/>
<polyline points="318.0,335.0 322.0,345.0 326.0,355.0" stroke="#f9802f" stroke-width="2.2"/>
<polyline points="302.0,392.0 310.0,386.0" stroke="#f9802f" stroke-width="2.2"/>
<polyline points="278.0,360.0 292.0,362.0 306.0,366.0" stroke="#f9802f" stroke-width="2.2"/>
<polyline points="116.6,358.6 107.4,372.0 101.4,388.4 95.3,400.5 85.5,407.6 79.0,418.8 73.0,429.0 63.0,440.0 50.7,449.0 27.4,462.4 16.0,473.5 9.0,486.6 0.0,492.0" stroke="#f9802f" stroke-width="2.5"/>
<polyline points="116.6,358.6 120.6,380.0 115.5,400.5 117.6,420.8 125.7,439.0 134.8,459.3" stroke="#f98a3c" stroke-width="1.9"/>
<polyline points="74.0,365.7 91.0,368.0 105.4,364.0 116.6,358.6" stroke="#f98a3c" stroke-width="1.9"/>
<polyline points="74.0,365.7 50.7,360.0 42.0,356.0" stroke="#f98a3c" stroke-width="1.6"/>
<polyline points="23.0,420.8 46.6,406.6 69.0,409.7 85.5,407.6" stroke="#f98a3c" stroke-width="1.9"/>
<polyline points="23.0,420.8 44.6,423.9 63.0,427.0 73.0,429.0 95.3,431.0 109.5,443.0 121.6,450.0 134.8,459.3" stroke="#f98a3c" stroke-width="1.9"/>
<polyline points="23.0,420.8 20.0,441.0 26.4,453.0 27.4,462.4" stroke="#f98a3c" stroke-width="1.9"/>
<polyline points="23.0,420.8 0.0,414.7" stroke="#f98a3c" stroke-width="1.6"/>
<polyline points="27.4,462.4 0.0,455.0" stroke="#f98a3c" stroke-width="1.6"/>
<polyline points="16.0,472.0 9.0,486.6" stroke="#f98a3c" stroke-width="1.9"/>
<polyline points="0.0,560.0 4.0,553.0 12.0,541.0 24.3,528.8 30.4,512.5 40.5,500.0 52.7,492.0 58.8,490.0 67.0,482.0 69.0,472.0 73.0,469.5 85.0,459.3 101.4,455.3 113.5,455.3 123.7,452.0 134.8,459.3 150.0,457.3 162.0,454.0 180.0,455.3 200.3,450.6 220.5,447.0 234.7,439.0 245.0,431.0 257.0,423.0 265.0,414.7 275.3,402.6 285.4,388.4 289.5,381.3 293.5,372.0 302.0,366.0 309.0,366.7" stroke="#f0623a" stroke-width="3.0"/>
<polyline points="134.8,459.3 142.0,467.4 145.0,480.0 146.0,488.2 152.4,503.4" stroke="#f9802f" stroke-width="2.3"/>
<polyline points="245.0,431.0 261.0,433.0 274.0,434.0 290.5,432.0" stroke="#f9802f" stroke-width="2.3"/>
<polyline points="311.8,379.3 305.7,384.0 301.6,400.5 296.0,418.4 290.5,427.0 290.5,432.0 293.0,442.7 285.4,453.0 272.0,463.4 271.0,472.0 269.2,482.0 261.0,490.0 260.0,502.4 262.0,511.5 251.0,524.7 243.9,537.9 236.8,549.0 233.0,559.0 230.3,566.3 228.7,581.5 230.7,592.0" stroke="#f9802f" stroke-width="2.8"/>
<polyline points="275.3,402.6 285.4,410.7 296.0,418.4" stroke="#f98a3c" stroke-width="1.7"/>
<polyline points="200.3,450.6 194.0,470.0 191.0,485.0 194.0,499.4" stroke="#f98a3c" stroke-width="1.7"/>
<polyline points="52.7,494.0 60.8,502.4 79.0,505.4 83.0,512.5 84.0,524.7 87.6,531.8 93.2,540.0 101.4,547.0 100.3,561.2 113.5,569.3 125.7,577.4 131.8,585.5 135.0,592.0" stroke="#f9802f" stroke-width="2.3"/>
<polyline points="100.3,561.2 93.2,567.3 89.2,579.4 75.0,585.5 73.0,592.0" stroke="#f98a3c" stroke-width="1.9"/>
<polyline points="152.4,503.4 152.0,522.7 154.0,543.0 156.0,563.2 154.0,592.0" stroke="#f9802f" stroke-width="2.3"/>
<polyline points="152.4,503.4 166.2,496.3 176.4,484.0 182.0,475.0 194.0,462.0 200.3,450.6" stroke="#f9802f" stroke-width="2.3"/>
<polyline points="152.4,503.4 160.2,512.5 180.0,507.5 180.0,500.4 194.0,499.4 206.4,518.6 218.5,531.8 230.7,539.0 236.8,549.0" stroke="#f9802f" stroke-width="2.3"/>
<polyline points="9.0,486.6 22.0,490.0 40.5,500.0" stroke="#f98a3c" stroke-width="1.7"/>
<polyline points="9.0,486.6 0.0,480.0" stroke="#f98a3c" stroke-width="1.9"/>
</g>
<path d="M62.5 11.3 q0 -1.500 1.5 -1.5 h9 q1.5 0 1.5 1.5 v6.5 l-6 5 l-6 -5z" fill="#f9a39f" stroke="#7c2a2c" stroke-width=".9"/>
<text x="68.5" y="18.2" font-size="9" text-anchor="middle" fill="#6a1a1a">55</text>
<path d="M87.2 92.8 q0 -1.500 1.5 -1.5 h9 q1.5 0 1.5 1.5 v6.5 l-6 5 l-6 -5z" fill="#f9a39f" stroke="#7c2a2c" stroke-width=".9"/>
<text x="93.2" y="99.7" font-size="9" text-anchor="middle" fill="#6a1a1a">55</text>
<path d="M170.4 68.0 h12 v9 l-6 3 l-6 -3z" fill="#bd7428"/>
<text x="176.4" y="76.2" font-size="8" text-anchor="middle" fill="#f7943a">39</text>
<path d="M201.7 93.5 q0 -1.500 1.5 -1.5 h9 q1.5 0 1.5 1.5 v6.5 l-6 5 l-6 -5z" fill="#f9a39f" stroke="#7c2a2c" stroke-width=".9"/>
<text x="207.7" y="100.4" font-size="9" text-anchor="middle" fill="#6a1a1a">34</text>
<path d="M271.0 76.5 q0 -1.500 1.5 -1.5 h9 q1.5 0 1.5 1.5 v6.5 l-6 5 l-6 -5z" fill="#f9a39f" stroke="#7c2a2c" stroke-width=".9"/>
<text x="277.0" y="83.4" font-size="9" text-anchor="middle" fill="#6a1a1a">34</text>
<path d="M254.5 105.5 q0 -1.500 1.5 -1.5 h9 q1.5 0 1.5 1.5 v6.5 l-6 5 l-6 -5z" fill="#f9a39f" stroke="#7c2a2c" stroke-width=".9"/>
<text x="260.5" y="112.4" font-size="9" text-anchor="middle" fill="#6a1a1a">37</text>
<path d="M266.5 -1.9 q5.5 -2 11 0 q1 6 -1.5 10 q-4 2.5 -4 2.5 q0 0 -4 -2.5 q-2.500 -4 -1.5 -10z" fill="#7c5a98"/>
<text x="272.0" y="6.2" font-size="8" text-anchor="middle" fill="#e2a4b8">95</text>
<path d="M394.5 32.0 q5.5 -2 11 0 q1 6 -1.5 10 q-4 2.5 -4 2.5 q0 0 -4 -2.5 q-2.500 -4 -1.5 -10z" fill="#7c5a98"/>
<text x="400.0" y="40.1" font-size="8" text-anchor="middle" fill="#e2a4b8">78</text>
<path d="M381.4 113.1 q0 -1.500 1.5 -1.5 h9 q1.5 0 1.5 1.5 v6.5 l-6 5 l-6 -5z" fill="#f9a39f" stroke="#7c2a2c" stroke-width=".9"/>
<text x="387.4" y="120.0" font-size="9" text-anchor="middle" fill="#6a1a1a">34</text>
<path d="M74.0 145.5 q0 -1.500 1.5 -1.5 h9 q1.5 0 1.5 1.5 v6.5 l-6 5 l-6 -5z" fill="#f9a39f" stroke="#7c2a2c" stroke-width=".9"/>
<text x="80.0" y="152.4" font-size="9" text-anchor="middle" fill="#6a1a1a">34</text>
<path d="M133.8 192.5 q5.5 -2 11 0 q1 6 -1.5 10 q-4 2.5 -4 2.5 q0 0 -4 -2.5 q-2.500 -4 -1.5 -10z" fill="#7c5a98"/>
<text x="139.3" y="200.6" font-size="8" text-anchor="middle" fill="#e2a4b8">84</text>
<path d="M82.8 218.4 h12 v9 l-6 3 l-6 -3z" fill="#bd7428"/>
<text x="88.8" y="226.6" font-size="8" text-anchor="middle" fill="#f7943a">39</text>
<path d="M169.8 198.5 q5.5 -2 11 0 q1 6 -1.5 10 q-4 2.5 -4 2.5 q0 0 -4 -2.5 q-2.500 -4 -1.5 -10z" fill="#7c5a98"/>
<text x="175.3" y="206.6" font-size="8" text-anchor="middle" fill="#e2a4b8">86</text>
<path d="M230.9 186.5 q5.5 -2 11 0 q1 6 -1.5 10 q-4 2.5 -4 2.5 q0 0 -4 -2.5 q-2.500 -4 -1.5 -10z" fill="#7c5a98"/>
<text x="236.4" y="194.6" font-size="8" text-anchor="middle" fill="#e2a4b8">84</text>
<path d="M396.0 218.9 q0 -1.500 1.5 -1.5 h9 q1.5 0 1.5 1.5 v6.5 l-6 5 l-6 -5z" fill="#f9a39f" stroke="#7c2a2c" stroke-width=".9"/>
<text x="402.0" y="225.8" font-size="9" text-anchor="middle" fill="#6a1a1a">1</text>
<path d="M129.4 251.5 q0 -1.500 1.5 -1.5 h9 q1.5 0 1.5 1.5 v6.5 l-6 5 l-6 -5z" fill="#f9a39f" stroke="#7c2a2c" stroke-width=".9"/>
<text x="135.4" y="258.4" font-size="9" text-anchor="middle" fill="#6a1a1a">32</text>
<path d="M25.4 327.0 h12 v9 l-6 3 l-6 -3z" fill="#bd7428"/>
<text x="31.4" y="335.2" font-size="8" text-anchor="middle" fill="#f7943a">39</text>
<path d="M20.9 282.1 q5.5 -2 11 0 q1 6 -1.5 10 q-4 2.5 -4 2.5 q0 0 -4 -2.5 q-2.500 -4 -1.5 -10z" fill="#7c5a98"/>
<text x="26.4" y="290.2" font-size="8" text-anchor="middle" fill="#e2a4b8"></text>
<path d="M99.8 375.2 q0 -1.500 1.5 -1.5 h9 q1.5 0 1.5 1.5 v6.5 l-6 5 l-6 -5z" fill="#f9a39f" stroke="#7c2a2c" stroke-width=".9"/>
<text x="105.8" y="382.1" font-size="9" text-anchor="middle" fill="#6a1a1a">41</text>
<path d="M112.1 417.3 q5.5 -2 11 0 q1 6 -1.5 10 q-4 2.5 -4 2.5 q0 0 -4 -2.5 q-2.500 -4 -1.5 -10z" fill="#7c5a98"/>
<text x="117.6" y="425.4" font-size="8" text-anchor="middle" fill="#e2a4b8">81</text>
<path d="M99.0 449.7 h12 v9 l-6 3 l-6 -3z" fill="#bd7428"/>
<text x="105.0" y="457.9" font-size="8" text-anchor="middle" fill="#f7943a">31</text>
<path d="M268.8 428.5 q5.5 -2 11 0 q1 6 -1.5 10 q-4 2.5 -4 2.5 q0 0 -4 -2.5 q-2.500 -4 -1.5 -10z" fill="#7c5a98"/>
<text x="274.3" y="436.6" font-size="8" text-anchor="middle" fill="#e2a4b8">80</text>
<path d="M81.6 527.3 q0 -1.500 1.5 -1.5 h9 q1.5 0 1.5 1.5 v6.5 l-6 5 l-6 -5z" fill="#f9a39f" stroke="#7c2a2c" stroke-width=".9"/>
<text x="87.6" y="534.2" font-size="9" text-anchor="middle" fill="#6a1a1a">18</text>
<path d="M212.5 527.3 q0 -1.500 1.5 -1.5 h9 q1.5 0 1.5 1.5 v6.5 l-6 5 l-6 -5z" fill="#f9a39f" stroke="#7c2a2c" stroke-width=".9"/>
<text x="218.5" y="534.2" font-size="9" text-anchor="middle" fill="#6a1a1a">52</text>
<path d="M237.9 533.4 q0 -1.500 1.5 -1.5 h9 q1.5 0 1.5 1.5 v6.5 l-6 5 l-6 -5z" fill="#f9a39f" stroke="#7c2a2c" stroke-width=".9"/>
<text x="243.9" y="540.3" font-size="9" text-anchor="middle" fill="#6a1a1a">1</text>
<circle cx="92.2" cy="81.5" r="2.1" fill="#ee9092" stroke="#6c1c24" stroke-width="1.1"/>
<circle cx="147.6" cy="81.5" r="2.1" fill="#ee9092" stroke="#6c1c24" stroke-width="1.1"/>
<circle cx="151.0" cy="97.9" r="2.1" fill="#ee9092" stroke="#6c1c24" stroke-width="1.1"/>
<circle cx="177.3" cy="56.8" r="2.1" fill="#ee9092" stroke="#6c1c24" stroke-width="1.1"/>
<circle cx="178.6" cy="12.5" r="2.1" fill="#ee9092" stroke="#6c1c24" stroke-width="1.1"/>
<circle cx="164.4" cy="111.5" r="2.1" fill="#ee9092" stroke="#6c1c24" stroke-width="1.1"/>
<circle cx="206.0" cy="21.7" r="2.1" fill="#ee9092" stroke="#6c1c24" stroke-width="1.1"/>
<circle cx="227.0" cy="58.4" r="2.1" fill="#ee9092" stroke="#6c1c24" stroke-width="1.1"/>
<circle cx="243.9" cy="83.7" r="2.1" fill="#ee9092" stroke="#6c1c24" stroke-width="1.1"/>
<circle cx="273.0" cy="26.0" r="2.1" fill="#ee9092" stroke="#6c1c24" stroke-width="1.1"/>
<circle cx="282.0" cy="62.0" r="2.1" fill="#ee9092" stroke="#6c1c24" stroke-width="1.1"/>
<circle cx="309.7" cy="91.6" r="2.1" fill="#ee9092" stroke="#6c1c24" stroke-width="1.1"/>
<circle cx="299.6" cy="94.7" r="2.7" fill="#e98a90" stroke="#5e0f1c" stroke-width="1.5"/>
<circle cx="346.0" cy="52.0" r="2.1" fill="#ee9092" stroke="#6c1c24" stroke-width="1.1"/>
<circle cx="311.0" cy="7.5" r="2.1" fill="#ee9092" stroke="#6c1c24" stroke-width="1.1"/>
<circle cx="353.0" cy="84.0" r="2.1" fill="#ee9092" stroke="#6c1c24" stroke-width="1.1"/>
<circle cx="359.5" cy="11.8" r="2.1" fill="#ee9092" stroke="#6c1c24" stroke-width="1.1"/>
<circle cx="359.0" cy="40.0" r="2.1" fill="#ee9092" stroke="#6c1c24" stroke-width="1.1"/>
<circle cx="444.0" cy="23.7" r="2.1" fill="#ee9092" stroke="#6c1c24" stroke-width="1.1"/>
<circle cx="476.6" cy="19.7" r="2.7" fill="#e98a90" stroke="#5e0f1c" stroke-width="1.5"/>
<circle cx="468.0" cy="52.3" r="2.1" fill="#ee9092" stroke="#6c1c24" stroke-width="1.1"/>
<circle cx="454.7" cy="94.7" r="2.1" fill="#ee9092" stroke="#6c1c24" stroke-width="1.1"/>
<circle cx="466.0" cy="94.0" r="2.1" fill="#ee9092" stroke="#6c1c24" stroke-width="1.1"/>
<circle cx="483.0" cy="7.5" r="2.1" fill="#ee9092" stroke="#6c1c24" stroke-width="1.1"/>
<circle cx="47.6" cy="153.0" r="2.1" fill="#ee9092" stroke="#6c1c24" stroke-width="1.1"/>
<circle cx="115.0" cy="154.0" r="2.1" fill="#ee9092" stroke="#6c1c24" stroke-width="1.1"/>
<circle cx="152.0" cy="164.6" r="2.1" fill="#ee9092" stroke="#6c1c24" stroke-width="1.1"/>
<circle cx="58.8" cy="184.9" r="2.1" fill="#ee9092" stroke="#6c1c24" stroke-width="1.1"/>
<circle cx="109.5" cy="204.0" r="2.7" fill="#e98a90" stroke="#5e0f1c" stroke-width="1.5"/>
<circle cx="80.0" cy="203.5" r="2.7" fill="#e98a90" stroke="#5e0f1c" stroke-width="1.5"/>
<circle cx="137.4" cy="235.0" r="2.7" fill="#e98a90" stroke="#5e0f1c" stroke-width="1.5"/>
<circle cx="173.6" cy="183.0" r="2.1" fill="#ee9092" stroke="#6c1c24" stroke-width="1.1"/>
<circle cx="279.3" cy="135.0" r="2.1" fill="#ee9092" stroke="#6c1c24" stroke-width="1.1"/>
<circle cx="291.5" cy="158.5" r="2.1" fill="#ee9092" stroke="#6c1c24" stroke-width="1.1"/>
<circle cx="294.0" cy="186.5" r="2.7" fill="#e98a90" stroke="#5e0f1c" stroke-width="1.5"/>
<circle cx="295.5" cy="207.0" r="2.7" fill="#e98a90" stroke="#5e0f1c" stroke-width="1.5"/>
<circle cx="318.9" cy="236.0" r="2.7" fill="#e98a90" stroke="#5e0f1c" stroke-width="1.5"/>
<circle cx="200.3" cy="165.0" r="2.1" fill="#ee9092" stroke="#6c1c24" stroke-width="1.1"/>
<circle cx="343.8" cy="141.7" r="2.1" fill="#ee9092" stroke="#6c1c24" stroke-width="1.1"/>
<circle cx="190.0" cy="237.6" r="2.7" fill="#e98a90" stroke="#5e0f1c" stroke-width="1.5"/>
<circle cx="460.4" cy="127.5" r="2.7" fill="#e98a90" stroke="#5e0f1c" stroke-width="1.5"/>
<circle cx="446.0" cy="129.7" r="2.1" fill="#ee9092" stroke="#6c1c24" stroke-width="1.1"/>
<circle cx="450.3" cy="147.8" r="2.1" fill="#ee9092" stroke="#6c1c24" stroke-width="1.1"/>
<circle cx="416.8" cy="169.3" r="2.1" fill="#ee9092" stroke="#6c1c24" stroke-width="1.1"/>
<circle cx="441.8" cy="169.3" r="2.1" fill="#ee9092" stroke="#6c1c24" stroke-width="1.1"/>
<circle cx="383.4" cy="182.0" r="2.1" fill="#ee9092" stroke="#6c1c24" stroke-width="1.1"/>
<circle cx="428.0" cy="199.0" r="2.7" fill="#e98a90" stroke="#5e0f1c" stroke-width="1.5"/>
<circle cx="76.0" cy="251.0" r="2.1" fill="#ee9092" stroke="#6c1c24" stroke-width="1.1"/>
<circle cx="36.5" cy="270.4" r="2.1" fill="#ee9092" stroke="#6c1c24" stroke-width="1.1"/>
<circle cx="74.6" cy="291.7" r="2.7" fill="#e98a90" stroke="#5e0f1c" stroke-width="1.5"/>
<circle cx="131.8" cy="287.0" r="2.1" fill="#ee9092" stroke="#6c1c24" stroke-width="1.1"/>
<circle cx="117.0" cy="296.0" r="2.1" fill="#ee9092" stroke="#6c1c24" stroke-width="1.1"/>
<circle cx="91.0" cy="319.7" r="2.1" fill="#ee9092" stroke="#6c1c24" stroke-width="1.1"/>
<circle cx="61.4" cy="315.6" r="2.7" fill="#e98a90" stroke="#5e0f1c" stroke-width="1.5"/>
<circle cx="150.4" cy="305.5" r="2.7" fill="#e98a90" stroke="#5e0f1c" stroke-width="1.5"/>
<circle cx="163.2" cy="329.8" r="2.7" fill="#e98a90" stroke="#5e0f1c" stroke-width="1.5"/>
<circle cx="115.0" cy="333.7" r="2.7" fill="#e98a90" stroke="#5e0f1c" stroke-width="1.5"/>
<circle cx="116.6" cy="358.6" r="2.7" fill="#e98a90" stroke="#5e0f1c" stroke-width="1.5"/>
<circle cx="74.0" cy="365.7" r="2.7" fill="#e98a90" stroke="#5e0f1c" stroke-width="1.5"/>
<circle cx="189.0" cy="318.0" r="2.7" fill="#e98a90" stroke="#5e0f1c" stroke-width="1.5"/>
<circle cx="334.0" cy="261.3" r="2.7" fill="#e98a90" stroke="#5e0f1c" stroke-width="1.5"/>
<circle cx="350.7" cy="300.8" r="2.7" fill="#e98a90" stroke="#5e0f1c" stroke-width="1.5"/>
<circle cx="332.4" cy="319.0" r="2.7" fill="#e98a90" stroke="#5e0f1c" stroke-width="1.5"/>
<circle cx="284.4" cy="336.3" r="2.7" fill="#e98a90" stroke="#5e0f1c" stroke-width="1.5"/>
<circle cx="279.3" cy="351.0" r="2.7" fill="#e98a90" stroke="#5e0f1c" stroke-width="1.5"/>
<circle cx="301.0" cy="346.8" r="2.7" fill="#e98a90" stroke="#5e0f1c" stroke-width="1.5"/>
<circle cx="211.4" cy="346.8" r="2.1" fill="#ee9092" stroke="#6c1c24" stroke-width="1.1"/>
<circle cx="333.0" cy="245.0" r="2.7" fill="#e98a90" stroke="#5e0f1c" stroke-width="1.5"/>
<circle cx="368.2" cy="271.0" r="2.7" fill="#e98a90" stroke="#5e0f1c" stroke-width="1.5"/>
<circle cx="356.5" cy="277.3" r="2.7" fill="#e98a90" stroke="#5e0f1c" stroke-width="1.5"/>
<circle cx="85.5" cy="407.6" r="2.7" fill="#e98a90" stroke="#5e0f1c" stroke-width="1.5"/>
<circle cx="23.0" cy="420.8" r="2.7" fill="#e98a90" stroke="#5e0f1c" stroke-width="1.5"/>
<circle cx="63.0" cy="440.0" r="2.7" fill="#e98a90" stroke="#5e0f1c" stroke-width="1.5"/>
<circle cx="27.4" cy="462.4" r="2.7" fill="#e98a90" stroke="#5e0f1c" stroke-width="1.5"/>
<circle cx="134.8" cy="459.3" r="2.7" fill="#e98a90" stroke="#5e0f1c" stroke-width="1.5"/>
<circle cx="180.5" cy="421.8" r="2.1" fill="#ee9092" stroke="#6c1c24" stroke-width="1.1"/>
<circle cx="309.0" cy="366.7" r="2.7" fill="#e98a90" stroke="#5e0f1c" stroke-width="1.5"/>
<circle cx="321.5" cy="363.0" r="2.7" fill="#e98a90" stroke="#5e0f1c" stroke-width="1.5"/>
<circle cx="311.8" cy="379.3" r="2.7" fill="#e98a90" stroke="#5e0f1c" stroke-width="1.5"/>
<circle cx="289.5" cy="381.3" r="2.7" fill="#e98a90" stroke="#5e0f1c" stroke-width="1.5"/>
<circle cx="296.0" cy="418.4" r="2.7" fill="#e98a90" stroke="#5e0f1c" stroke-width="1.5"/>
<circle cx="290.5" cy="432.0" r="2.1" fill="#ee9092" stroke="#6c1c24" stroke-width="1.1"/>
<circle cx="293.0" cy="442.7" r="2.1" fill="#ee9092" stroke="#6c1c24" stroke-width="1.1"/>
<circle cx="272.0" cy="463.4" r="2.1" fill="#ee9092" stroke="#6c1c24" stroke-width="1.1"/>
<circle cx="257.0" cy="423.9" r="2.7" fill="#e98a90" stroke="#5e0f1c" stroke-width="1.5"/>
<circle cx="200.3" cy="450.6" r="2.7" fill="#e98a90" stroke="#5e0f1c" stroke-width="1.5"/>
<circle cx="9.0" cy="486.6" r="2.7" fill="#e98a90" stroke="#5e0f1c" stroke-width="1.5"/>
<circle cx="79.0" cy="505.4" r="2.1" fill="#ee9092" stroke="#6c1c24" stroke-width="1.1"/>
<circle cx="152.4" cy="503.4" r="2.7" fill="#e98a90" stroke="#5e0f1c" stroke-width="1.5"/>
<circle cx="148.0" cy="515.2" r="2.7" fill="#e98a90" stroke="#5e0f1c" stroke-width="1.5"/>
<circle cx="158.5" cy="514.6" r="2.7" fill="#e98a90" stroke="#5e0f1c" stroke-width="1.5"/>
<circle cx="262.0" cy="511.5" r="2.1" fill="#ee9092" stroke="#6c1c24" stroke-width="1.1"/>
<circle cx="230.3" cy="566.3" r="2.1" fill="#ee9092" stroke="#6c1c24" stroke-width="1.1"/>
<circle cx="234.7" cy="581.5" r="2.1" fill="#ee9092" stroke="#6c1c24" stroke-width="1.1"/>
<circle cx="12.6" cy="359.0" r="2.1" fill="#ee9092" stroke="#6c1c24" stroke-width="1.1"/>
<circle cx="12.0" cy="573.0" r="2.1" fill="#ee9092" stroke="#6c1c24" stroke-width="1.1"/>
<circle cx="8.0" cy="205.0" r="2.1" fill="#ee9092" stroke="#6c1c24" stroke-width="1.1"/>
<path d="M263.0 286.2 l3.6 6.5 h-2.8 v2 h-1.6 v-2 h-2.800z" fill="#9a3a34"/>
<path d="M131.8 533.4 l3.6 6.5 h-2.8 v2 h-1.6 v-2 h-2.800z" fill="#9a3a34"/>
<g filter="url(#halo)" stroke="#72161c" stroke-width=".4" fill="#72161c">
<text x="71.4" y="77.2" font-size="9.5" textLength="43.1" lengthAdjust="spacingAndGlyphs" fill="#84262c" stroke="#84262c">Coonamble</text>
<text x="131.8" y="77.2" font-size="9.5" textLength="31.4" lengthAdjust="spacingAndGlyphs" fill="#84262c" stroke="#84262c">Baradine</text>
<text x="136.2" y="94.0" font-size="9.5" textLength="31.0" lengthAdjust="spacingAndGlyphs" fill="#84262c" stroke="#84262c">Bugaldie</text>
<text x="157.7" y="52.8" font-size="9.5" textLength="39.8" lengthAdjust="spacingAndGlyphs" fill="#84262c" stroke="#84262c">The Pilliga</text>
<text x="159.4" y="7.8" font-size="9.5" textLength="37.1" lengthAdjust="spacingAndGlyphs" fill="#84262c" stroke="#84262c">Wee Waa</text>
<text x="135.7" y="122.8" font-size="9.5" textLength="58.3" lengthAdjust="spacingAndGlyphs" fill="#84262c" stroke="#84262c">Coonabarabran</text>
<text x="190.0" y="32.6" font-size="9.5" textLength="31.5" lengthAdjust="spacingAndGlyphs" fill="#84262c" stroke="#84262c">Narrabri</text>
<text x="211.0" y="53.5" font-size="9.5" textLength="33.0" lengthAdjust="spacingAndGlyphs" fill="#84262c" stroke="#84262c">Boggabri</text>
<text x="224.0" y="79.8" font-size="9.5" textLength="40.0" lengthAdjust="spacingAndGlyphs" fill="#84262c" stroke="#84262c">Gunnedah</text>
<text x="259.5" y="22.8" font-size="9.5" textLength="28.5" lengthAdjust="spacingAndGlyphs" fill="#84262c" stroke="#84262c">Barraba</text>
<text x="269.0" y="57.8" font-size="9.5" textLength="26.5" lengthAdjust="spacingAndGlyphs" fill="#84262c" stroke="#84262c">Manilla</text>
<text x="292.5" y="86.5" font-size="9.5" textLength="33.5" lengthAdjust="spacingAndGlyphs" fill="#84262c" stroke="#84262c">Kootingal</text>
<text x="280.0" y="106.6" font-size="9.5" textLength="39.5" lengthAdjust="spacingAndGlyphs" fill="#84262c" stroke="#84262c">Tamworth</text>
<text x="335.7" y="61.8" font-size="9.5" textLength="21.1" lengthAdjust="spacingAndGlyphs" fill="#84262c" stroke="#84262c">Uralla</text>
<text x="294.5" y="4.8" font-size="9.5" textLength="33.1" lengthAdjust="spacingAndGlyphs" fill="#84262c" stroke="#84262c">Bundarra</text>
<text x="338.5" y="80.8" font-size="9.5" textLength="27.5" lengthAdjust="spacingAndGlyphs" fill="#84262c" stroke="#84262c">Walcha</text>
<text x="348.8" y="8.3" font-size="9.5" textLength="22.6" lengthAdjust="spacingAndGlyphs" fill="#84262c" stroke="#84262c">Guyra</text>
<text x="342.3" y="36.3" font-size="9.5" textLength="34.2" lengthAdjust="spacingAndGlyphs" fill="#84262c" stroke="#84262c">Armidale</text>
<text x="413.0" y="27.1" font-size="9.5" textLength="26.7" lengthAdjust="spacingAndGlyphs" fill="#84262c" stroke="#84262c">Dorrigo</text>
<text x="465.5" y="32.4" font-size="10.1" textLength="23.3" lengthAdjust="spacingAndGlyphs" fill="#84262c" stroke="#84262c">Coffs</text>
<text x="458.8" y="43.1" font-size="10.3" textLength="37.1" lengthAdjust="spacingAndGlyphs" fill="#84262c" stroke="#84262c">Harbour</text>
<text x="447.0" y="62.8" font-size="9.5" textLength="42.0" lengthAdjust="spacingAndGlyphs" fill="#84262c" stroke="#84262c">Nambucca</text>
<text x="456.0" y="72.8" font-size="9.5" textLength="25.0" lengthAdjust="spacingAndGlyphs" fill="#84262c" stroke="#84262c">Heads</text>
<text x="420.0" y="92.8" font-size="9.5" textLength="22.6" lengthAdjust="spacingAndGlyphs" fill="#84262c" stroke="#84262c">South</text>
<text x="413.0" y="102.5" font-size="9.5" textLength="36.7" lengthAdjust="spacingAndGlyphs" fill="#84262c" stroke="#84262c">Kempsey</text>
<text x="470.5" y="91.8" font-size="9.5" textLength="30.0" lengthAdjust="spacingAndGlyphs" fill="#84262c" stroke="#84262c">Belmore</text>
<text x="476.0" y="101.5" font-size="9.5" textLength="19.0" lengthAdjust="spacingAndGlyphs" fill="#84262c" stroke="#84262c">River</text>
<text x="471.6" y="4.4" font-size="9.5" textLength="22.9" lengthAdjust="spacingAndGlyphs" fill="#84262c" stroke="#84262c">Beach</text>
<text x="33.4" y="149.2" font-size="9.5" textLength="27.4" lengthAdjust="spacingAndGlyphs" fill="#84262c" stroke="#84262c">Warren</text>
<text x="97.3" y="149.8" font-size="9.5" textLength="36.5" lengthAdjust="spacingAndGlyphs" fill="#84262c" stroke="#84262c">Gilgandra</text>
<text x="106.8" y="167.4" font-size="9.5" textLength="40.8" lengthAdjust="spacingAndGlyphs" fill="#84262c" stroke="#84262c">Mendooran</text>
<text x="45.0" y="181.2" font-size="9.5" textLength="28.0" lengthAdjust="spacingAndGlyphs" fill="#84262c" stroke="#84262c">Trangie</text>
<text x="94.9" y="198.2" font-size="10.6" textLength="31.1" lengthAdjust="spacingAndGlyphs" fill="#84262c" stroke="#84262c">Dubbo</text>
<text x="32.4" y="206.5" font-size="9.5" textLength="42.2" lengthAdjust="spacingAndGlyphs" fill="#84262c" stroke="#84262c">Narromine</text>
<text x="116.6" y="228.8" font-size="9.5" textLength="41.9" lengthAdjust="spacingAndGlyphs" fill="#84262c" stroke="#84262c">Wellington</text>
<text x="156.0" y="179.2" font-size="9.5" textLength="35.5" lengthAdjust="spacingAndGlyphs" fill="#84262c" stroke="#84262c">Dunedoo</text>
<text x="264.7" y="131.3" font-size="9.5" textLength="28.8" lengthAdjust="spacingAndGlyphs" fill="#84262c" stroke="#84262c">Quirindi</text>
<text x="272.0" y="155.2" font-size="9.5" textLength="39.4" lengthAdjust="spacingAndGlyphs" fill="#84262c" stroke="#84262c">Murrurundi</text>
<text x="282.0" y="180.8" font-size="9.5" textLength="25.3" lengthAdjust="spacingAndGlyphs" fill="#84262c" stroke="#84262c">Scone</text>
<text x="264.7" y="219.4" font-size="10.3" textLength="62.9" lengthAdjust="spacingAndGlyphs" fill="#84262c" stroke="#84262c">Muswellbrook</text>
<text x="271.0" y="239.1" font-size="10.3" textLength="42.8" lengthAdjust="spacingAndGlyphs" fill="#84262c" stroke="#84262c">Singleton</text>
<text x="187.7" y="160.3" font-size="9.5" textLength="25.3" lengthAdjust="spacingAndGlyphs" fill="#84262c" stroke="#84262c">Coolah</text>
<text x="331.0" y="137.4" font-size="9.5" textLength="25.0" lengthAdjust="spacingAndGlyphs" fill="#84262c" stroke="#84262c">Mernot</text>
<text x="171.0" y="233.7" font-size="10.5" textLength="37.8" lengthAdjust="spacingAndGlyphs" fill="#84262c" stroke="#84262c">Mudgee</text>
<text x="482.0" y="125.3" font-size="10.9" textLength="20.0" lengthAdjust="spacingAndGlyphs" fill="#84262c" stroke="#84262c">Port</text>
<text x="467.0" y="136.3" font-size="10.7" textLength="50.0" lengthAdjust="spacingAndGlyphs" fill="#84262c" stroke="#84262c">Macquarie</text>
<text x="401.0" y="132.5" font-size="9.5" textLength="40.0" lengthAdjust="spacingAndGlyphs" fill="#84262c" stroke="#84262c">Wauchope</text>
<text x="456.0" y="150.6" font-size="9.5" textLength="34.0" lengthAdjust="spacingAndGlyphs" fill="#84262c" stroke="#84262c">Laurieton</text>
<text x="398.6" y="164.8" font-size="9.5" textLength="35.9" lengthAdjust="spacingAndGlyphs" fill="#84262c" stroke="#84262c">Wingham</text>
<text x="446.0" y="172.1" font-size="9.5" textLength="37.7" lengthAdjust="spacingAndGlyphs" fill="#84262c" stroke="#84262c">Harrington</text>
<text x="362.0" y="177.8" font-size="9.5" textLength="41.7" lengthAdjust="spacingAndGlyphs" fill="#84262c" stroke="#84262c">Gloucester</text>
<text x="411.8" y="193.1" font-size="10.2" textLength="32.2" lengthAdjust="spacingAndGlyphs" fill="#84262c" stroke="#84262c">Forster</text>
<text x="60.8" y="246.8" font-size="9.5" textLength="31.2" lengthAdjust="spacingAndGlyphs" fill="#84262c" stroke="#84262c">Peak Hill</text>
<text x="23.0" y="266.8" font-size="9.5" textLength="27.7" lengthAdjust="spacingAndGlyphs" fill="#84262c" stroke="#84262c">Trundle</text>
<text x="59.0" y="285.7" font-size="10.3" textLength="32.0" lengthAdjust="spacingAndGlyphs" fill="#84262c" stroke="#84262c">Parkes</text>
<text x="118.0" y="282.8" font-size="9.5" textLength="28.0" lengthAdjust="spacingAndGlyphs" fill="#84262c" stroke="#84262c">Molong</text>
<text x="81.5" y="298.8" font-size="9.5" textLength="32.0" lengthAdjust="spacingAndGlyphs" fill="#84262c" stroke="#84262c">Manildra</text>
<text x="75.0" y="315.8" font-size="9.5" textLength="32.4" lengthAdjust="spacingAndGlyphs" fill="#84262c" stroke="#84262c">Eugowra</text>
<text x="24.0" y="318.7" font-size="10.2" textLength="31.7" lengthAdjust="spacingAndGlyphs" fill="#84262c" stroke="#84262c">Forbes</text>
<text x="133.4" y="318.0" font-size="10.1" textLength="33.6" lengthAdjust="spacingAndGlyphs" fill="#84262c" stroke="#84262c">Orange</text>
<text x="126.0" y="332.6" font-size="9.5" textLength="31.0" lengthAdjust="spacingAndGlyphs" fill="#84262c" stroke="#84262c">Blayney</text>
<text x="60.4" y="336.5" font-size="9.5" textLength="48.6" lengthAdjust="spacingAndGlyphs" fill="#84262c" stroke="#84262c">Canowindra</text>
<text x="102.0" y="354.1" font-size="10.2" textLength="29.4" lengthAdjust="spacingAndGlyphs" fill="#84262c" stroke="#84262c">Cowra</text>
<text x="58.0" y="359.4" font-size="9.5" textLength="32.0" lengthAdjust="spacingAndGlyphs" fill="#84262c" stroke="#84262c">Grenfell</text>
<text x="169.0" y="332.2" font-size="10.6" textLength="39.4" lengthAdjust="spacingAndGlyphs" fill="#84262c" stroke="#84262c">Bathurst</text>
<text x="224.0" y="288.8" font-size="9.5" textLength="31.0" lengthAdjust="spacingAndGlyphs" fill="#8c3632" stroke="#8c3632">Wollemi</text>
<text x="202.7" y="298.5" font-size="9.5" textLength="52.3" lengthAdjust="spacingAndGlyphs" fill="#8c3632" stroke="#8c3632">National Park</text>
<text x="282.8" y="264.8" font-size="10.3" textLength="45.2" lengthAdjust="spacingAndGlyphs" fill="#84262c" stroke="#84262c">Cessnock</text>
<text x="298.6" y="303.8" font-size="10.1" textLength="44.4" lengthAdjust="spacingAndGlyphs" fill="#84262c" stroke="#84262c">Budgewoi</text>
<text x="289.5" y="322.7" font-size="10.5" textLength="37.5" lengthAdjust="spacingAndGlyphs" fill="#84262c" stroke="#84262c">Gosford</text>
<text x="230.7" y="339.6" font-size="10.7" textLength="48.3" lengthAdjust="spacingAndGlyphs" fill="#84262c" stroke="#84262c">Richmond</text>
<text x="240.0" y="354.1" font-size="10.4" textLength="33.0" lengthAdjust="spacingAndGlyphs" fill="#84262c" stroke="#84262c">Penrith</text>
<text x="308.3" y="351.6" font-size="10.2" textLength="39.7" lengthAdjust="spacingAndGlyphs" fill="#84262c" stroke="#84262c">Kellyville</text>
<text x="178.0" y="349.6" font-size="9.5" textLength="28.0" lengthAdjust="spacingAndGlyphs" fill="#84262c" stroke="#84262c">Oberon</text>
<text x="340.0" y="248.4" font-size="10.2" textLength="40.8" lengthAdjust="spacingAndGlyphs" fill="#84262c" stroke="#84262c">Branxton</text>
<text x="342.0" y="264.0" font-size="11.3" textLength="52.0" lengthAdjust="spacingAndGlyphs" fill="#84262c" stroke="#84262c">Newcastle</text>
<text x="337.0" y="288.8" font-size="9.5" textLength="38.7" lengthAdjust="spacingAndGlyphs" fill="#84262c" stroke="#84262c">Eleebana</text>
<text x="71.0" y="401.5" font-size="10.1" textLength="28.3" lengthAdjust="spacingAndGlyphs" fill="#84262c" stroke="#84262c">Young</text>
<text x="7.7" y="415.5" font-size="9.5" textLength="29.8" lengthAdjust="spacingAndGlyphs" fill="#84262c" stroke="#84262c">Temora</text>
<text x="31.4" y="434.5" font-size="10.4" textLength="62.9" lengthAdjust="spacingAndGlyphs" fill="#84262c" stroke="#84262c">Cootamundra</text>
<text x="32.4" y="465.6" font-size="9.5" textLength="24.4" lengthAdjust="spacingAndGlyphs" fill="#84262c" stroke="#84262c">Junee</text>
<text x="126.0" y="453.4" font-size="9.5" textLength="19.0" lengthAdjust="spacingAndGlyphs" fill="#84262c" stroke="#84262c">Yass</text>
<text x="160.0" y="416.3" font-size="9.5" textLength="40.0" lengthAdjust="spacingAndGlyphs" fill="#84262c" stroke="#84262c">Crookwell</text>
<text x="254.0" y="370.2" font-size="10.5" textLength="49.7" lengthAdjust="spacingAndGlyphs" fill="#84262c" stroke="#84262c">Greenacre</text>
<text x="329.0" y="366.8" font-size="10.5" textLength="35.0" lengthAdjust="spacingAndGlyphs" fill="#84262c" stroke="#84262c">Sydney</text>
<text x="317.8" y="382.5" font-size="9.5" textLength="28.8" lengthAdjust="spacingAndGlyphs" fill="#84262c" stroke="#84262c">Gymea</text>
<text x="254.0" y="397.4" font-size="11.4" textLength="72.0" lengthAdjust="spacingAndGlyphs" fill="#84262c" stroke="#84262c">Campbelltown</text>
<text x="302.5" y="422.3" font-size="11.4" textLength="60.1" lengthAdjust="spacingAndGlyphs">Wollongong</text>
<text x="296.6" y="434.8" font-size="9.5" textLength="38.4" lengthAdjust="spacingAndGlyphs" fill="#84262c" stroke="#84262c">Oak Flats</text>
<text x="279.0" y="454.6" font-size="10.1" textLength="28.7" lengthAdjust="spacingAndGlyphs" fill="#84262c" stroke="#84262c">Kiama</text>
<text x="258.0" y="475.0" font-size="10.0" textLength="29.0" lengthAdjust="spacingAndGlyphs" fill="#84262c" stroke="#84262c">Nowra</text>
<text x="221.0" y="427.4" font-size="10.1" textLength="31.0" lengthAdjust="spacingAndGlyphs" fill="#84262c" stroke="#84262c">Bowral</text>
<text x="180.0" y="464.5" font-size="10.2" textLength="42.0" lengthAdjust="spacingAndGlyphs" fill="#84262c" stroke="#84262c">Goulburn</text>
<text x="16.2" y="484.0" font-size="11.3" textLength="35.5" lengthAdjust="spacingAndGlyphs" fill="#84262c" stroke="#84262c">Wagga</text>
<text x="17.0" y="496.7" font-size="11.1" textLength="34.7" lengthAdjust="spacingAndGlyphs" fill="#84262c" stroke="#84262c">Wagga</text>
<text x="67.0" y="499.5" font-size="9.5" textLength="25.0" lengthAdjust="spacingAndGlyphs" fill="#84262c" stroke="#84262c">Tumut</text>
<text x="129.0" y="496.8" font-size="11.3" textLength="47.0" lengthAdjust="spacingAndGlyphs" fill="#84262c" stroke="#84262c">Canberra</text>
<text x="103.8" y="518.3" font-size="10.3" textLength="38.2" lengthAdjust="spacingAndGlyphs" fill="#84262c" stroke="#84262c">Kambah</text>
<text x="163.0" y="517.4" font-size="9.5" textLength="60.6" lengthAdjust="spacingAndGlyphs" fill="#84262c" stroke="#84262c">Jerrabomberra</text>
<text x="115.0" y="552.2" font-size="9.5" textLength="34.0" lengthAdjust="spacingAndGlyphs" fill="#8c3632" stroke="#8c3632">Namadgi</text>
<text x="106.8" y="562.4" font-size="9.5" textLength="51.2" lengthAdjust="spacingAndGlyphs" fill="#8c3632" stroke="#8c3632">National Park</text>
<text x="135.8" y="592.6" font-size="10.0" textLength="32.2" lengthAdjust="spacingAndGlyphs" fill="#84262c" stroke="#84262c">Cooma</text>
<text x="242.8" y="506.0" font-size="10.1" textLength="38.6" lengthAdjust="spacingAndGlyphs" fill="#84262c" stroke="#84262c">Ulladulla</text>
<text x="215.5" y="559.8" font-size="9.5" textLength="29.5" lengthAdjust="spacingAndGlyphs" fill="#84262c" stroke="#84262c">Moruya</text>
<text x="239.8" y="579.2" font-size="9.5" textLength="25.2" lengthAdjust="spacingAndGlyphs" fill="#84262c" stroke="#84262c">Tuross</text>
<text x="242.8" y="588.3" font-size="9.5" textLength="20.2" lengthAdjust="spacingAndGlyphs" fill="#84262c" stroke="#84262c">Head</text>
<text x="9.7" y="134.1" font-size="10.0" text-anchor="end" fill="#84262c" stroke="#84262c">an</text>
<text x="28.0" y="201.4" font-size="9.5" text-anchor="end" fill="#84262c" stroke="#84262c">Tottenham</text>
<text x="14.6" y="282.0" font-size="11.0" text-anchor="end" fill="#84262c" stroke="#84262c">olin</text>
<text x="32.4" y="356.2" font-size="9.0" text-anchor="end" fill="#84262c" stroke="#84262c">Black Creek</text>
<text x="6.0" y="380.4" font-size="10.5" text-anchor="end" fill="#84262c" stroke="#84262c">est</text>
<text x="13.8" y="391.0" font-size="11.0" text-anchor="end" fill="#84262c" stroke="#84262c">long</text>
<text x="15.2" y="455.0" font-size="11.0" text-anchor="end" fill="#84262c" stroke="#84262c">mon</text>
<text x="7.7" y="514.0" font-size="11.0" text-anchor="end" fill="#84262c" stroke="#84262c">ock</text>
<text x="9.7" y="530.7" font-size="11.0" text-anchor="end" fill="#84262c" stroke="#84262c">nty</text>
<text x="9.0" y="588.8" font-size="12.0" text-anchor="end" fill="#84262c" stroke="#84262c">ury</text>
</g>
<rect width="535" height="6" fill="url(#sht)"/><rect width="6" height="592" fill="url(#shl)"/>
<circle cx="27.4" cy="19.3" r="8.7" fill="url(#gbtn)" stroke="#f4f0f0" stroke-width="1.2"/>
<circle cx="17.2" cy="37.5" r="8.7" fill="url(#gbtn)" stroke="#f4f0f0" stroke-width="1.2"/>
<circle cx="38.0" cy="37.5" r="8.7" fill="url(#gbtn)" stroke="#f4f0f0" stroke-width="1.2"/>
<circle cx="27.4" cy="55.7" r="8.7" fill="url(#gbtn)" stroke="#f4f0f0" stroke-width="1.2"/>
<g fill="none" stroke="#fff" stroke-width="2.6" stroke-linecap="butt" stroke-linejoin="miter">
<path d="M24.0 20.8 l3.4 -3.4 l3.4 3.4"/>
<path d="M24.0 54.4 l3.4 3.4 l3.4 -3.4"/>
<path d="M18.7 34.1 l-3.4 3.4 l3.4 3.4"/>
<path d="M36.5 34.1 l3.4 3.4 l-3.4 3.4"/>
</g>
<circle cx="27.1" cy="78.6" r="6" fill="none" stroke="#4c4448" stroke-width="1.6"/>
<path d="M21.5 78.6 h2.600 M30.1 78.6 h2.600 M27.1 73.0 v2.600 M27.1 81.6 v2.600" stroke="#4c4448" stroke-width="1.5"/>
<rect x="26.5" y="108" width="2.4" height="184" fill="#ececec"/>
<rect x="18.2" y="113.5" width="19.0" height="2.2" fill="#ececec"/>
<rect x="19.4" y="122.5" width="16.5" height="2.2" fill="#ececec"/>
<rect x="20.2" y="131.6" width="15.0" height="2.2" fill="#ececec"/>
<rect x="21.2" y="140.6" width="13.0" height="2.2" fill="#ececec"/>
<rect x="22.4" y="149.6" width="10.6" height="2.2" fill="#ececec"/>
<rect x="23.0" y="159.0" width="9.4" height="1.5" fill="#ececec"/>
<rect x="23.7" y="168.0" width="8.0" height="1.5" fill="#ececec"/>
<rect x="23.7" y="177.1" width="8.0" height="1.5" fill="#ececec"/>
<rect x="23.7" y="186.1" width="8.0" height="1.5" fill="#ececec"/>
<rect x="23.7" y="195.1" width="8.0" height="1.5" fill="#ececec"/>
<rect x="23.7" y="204.2" width="8.0" height="1.5" fill="#ececec"/>
<rect x="23.7" y="213.2" width="8.0" height="1.5" fill="#ececec"/>
<rect x="23.7" y="222.2" width="8.0" height="1.5" fill="#ececec"/>
<rect x="23.7" y="231.2" width="8.0" height="1.5" fill="#ececec"/>
<rect x="23.7" y="240.3" width="8.0" height="1.5" fill="#ececec"/>
<rect x="23.7" y="249.3" width="8.0" height="1.5" fill="#ececec"/>
<rect x="23.7" y="258.3" width="8.0" height="1.5" fill="#ececec"/>
<rect x="23.7" y="267.4" width="8.0" height="1.5" fill="#ececec"/>
<rect x="23.7" y="276.4" width="8.0" height="1.5" fill="#ececec"/>
<rect x="23.7" y="285.4" width="8.0" height="1.5" fill="#ececec"/>
<circle cx="27.4" cy="100.3" r="9.0" fill="url(#gbtn)" stroke="#f4f0f0" stroke-width="1.2"/>
<path d="M22.9 100.3 h9 M27.4 95.8 v9" stroke="#fff" stroke-width="2.6"/>
<circle cx="27.8" cy="298.4" r="9.0" fill="url(#gbtn)" stroke="#f4f0f0" stroke-width="1.2"/>
<path d="M23.6 298.4 h8.400" stroke="#fff" stroke-width="2.6"/>
<rect x="20.0" y="191.600" width="16" height="7.200" rx="2" fill="#303030" stroke="#6a6a6a" stroke-width=".8"/>
<rect x="24.1" y="194.200" width="7.800" height="2" fill="#fff"/>
<rect x="22.8" y="315.700" width="8" height="8" fill="none" stroke="#6f9a9c" stroke-width="1.2"/>
<path d="M19.8 319.700 h14 M26.8 312.700 v14" stroke="#6f9a9c" stroke-width=".8"/>
</svg></div>
</body></html>
